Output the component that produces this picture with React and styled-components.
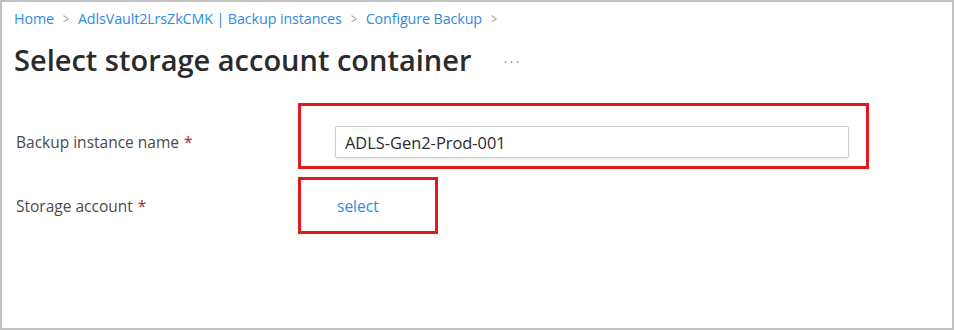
import React from "react";
import styled, { createGlobalStyle } from "styled-components";

const Global = createGlobalStyle`
  html, body { margin: 0; padding: 0; background: #fff; }
  body { font-family: "Open Sans", "Noto Sans", sans-serif; }
  * { box-sizing: border-box; }
`;

const Frame = styled.div`
  width: 954px;
  height: 330px;
  border: 2px solid #c2c2c2;
  background: #fff;
  padding: 6px 0 0 12px;
  display: flex;
  flex-direction: column;
`;

const Breadcrumb = styled.nav`
  display: flex;
  align-items: center;
  gap: 8px;
  font-size: 14.3px;
  line-height: 22px;
  color: #2f8be0;
  letter-spacing: -0.1px;
`;

const Crumb = styled.a`
  color: inherit;
  text-decoration: none;
`;

const Chevron = styled.span`
  color: #9c9c9c;
  font-size: 14px;
  transform: scaleX(0.75);
`;

const TitleRow = styled.div`
  display: flex;
  align-items: center;
  gap: 32px;
  margin-top: 11px;
`;

const Title = styled.h1`
  margin: 0;
  font-size: 29px;
  line-height: 38px;
  font-weight: 600;
  color: #2b2b2b;
`;

const More = styled.span`
  color: #a0a0a0;
  font-size: 15px;
  letter-spacing: 2px;
  margin-top: 2px;
`;

const Form = styled.div`
  display: flex;
  flex-direction: column;
  gap: 8px;
  margin-top: 24px;
`;

const Row = styled.div`
  display: flex;
  align-items: ${(p) => p.$align || "center"};
`;

const Label = styled.div`
  width: 284px;
  padding-left: 2px;
  font-size: 15.5px;
  line-height: 32px;
  color: #4a4a4a;
  margin-bottom: ${(p) => p.$bottom || 0}px;
`;

const Required = styled.span`
  color: #b0262c;
  margin-left: 5px;
`;

const Highlight = styled.div`
  border: 3px solid #e3191f;
  width: ${(p) => p.$w}px;
  height: ${(p) => p.$h}px;
  padding: ${(p) => p.$pad};
  display: flex;
  align-items: ${(p) => p.$align || "center"};
`;

const Input = styled.input`
  width: 514px;
  height: 32px;
  border: 1px solid #cfcfcf;
  box-shadow: 0 1px 2px rgba(0, 0, 0, 0.12);
  border-radius: 2px;
  padding: 0 9px;
  font-family: inherit;
  font-size: 16.4px;
  color: #2b2b2b;
  outline: none;
`;

const LinkText = styled.a`
  color: #2f8be0;
  font-size: 15.5px;
  text-decoration: none;
`;

export default function App() {
  return (
    <>
      <Global />
      <Frame>
        <Breadcrumb>
          <Crumb>Home</Crumb>
          <Chevron>&gt;</Chevron>
          <Crumb>AdlsVault2LrsZkCMK | Backup instances</Crumb>
          <Chevron>&gt;</Chevron>
          <Crumb>Configure Backup</Crumb>
          <Chevron>&gt;</Chevron>
        </Breadcrumb>
        <TitleRow>
          <Title>Select storage account container</Title>
          <More>···</More>
        </TitleRow>
        <Form>
          <Row $align="flex-end">
            <Label $bottom={11}>
              Backup instance name<Required>*</Required>
            </Label>
            <Highlight $w={571} $h={66} $pad="0 0 8px 34px" $align="flex-end">
              <Input defaultValue="ADLS-Gen2-Prod-001" />
            </Highlight>
          </Row>
          <Row>
            <Label>
              Storage account<Required>*</Required>
            </Label>
            <Highlight $w={140} $h={57} $pad="0 0 0 36px">
              <LinkText>select</LinkText>
            </Highlight>
          </Row>
        </Form>
      </Frame>
    </>
  );
}
